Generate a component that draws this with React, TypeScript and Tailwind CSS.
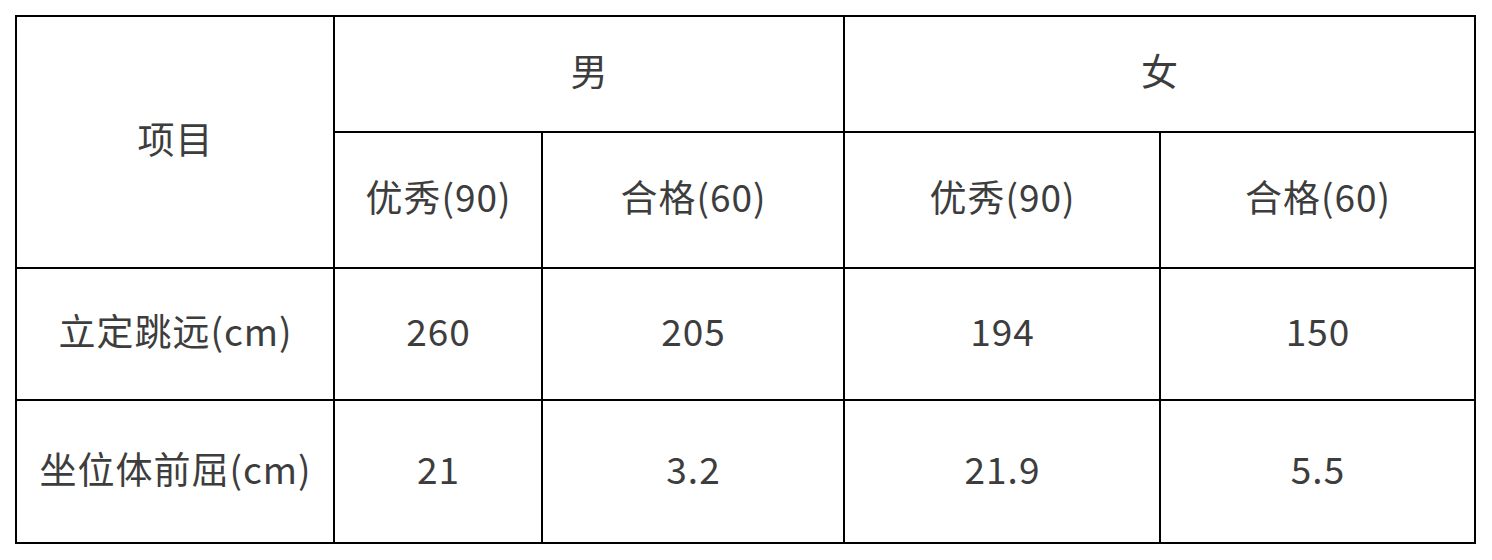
export default function App() {
  const cell = "bg-white flex items-center justify-center pb-[6px] pl-[1px]";
  return (
    <div className="w-[1492px] h-[560px] bg-white pt-[15px] pl-[15px] font-['Noto_Sans_CJK_SC','Noto_Sans',sans-serif] text-[37px] tracking-[1px] text-[#3d3d3d]">
      <div className="inline-grid bg-black p-[2px] gap-[2px] grid-cols-[316px_206px_300px_314px_313px] grid-rows-[114px_134px_130px_141px]">
        {/* header */}
        <div className={`${cell} row-span-2`}>项目</div>
        <div className={`${cell} col-span-2`}>男</div>
        <div className={`${cell} col-span-2`}>女</div>
        <div className={cell}>优秀(90)</div>
        <div className={cell}>合格(60)</div>
        <div className={cell}>优秀(90)</div>
        <div className={cell}>合格(60)</div>

        {/* rows */}
        <div className={cell}>立定跳远(cm)</div>
        <div className={cell}>260</div>
        <div className={cell}>205</div>
        <div className={cell}>194</div>
        <div className={cell}>150</div>

        <div className={cell}>坐位体前屈(cm)</div>
        <div className={cell}>21</div>
        <div className={cell}>3.2</div>
        <div className={cell}>21.9</div>
        <div className={cell}>5.5</div>
      </div>
    </div>
  );
}
